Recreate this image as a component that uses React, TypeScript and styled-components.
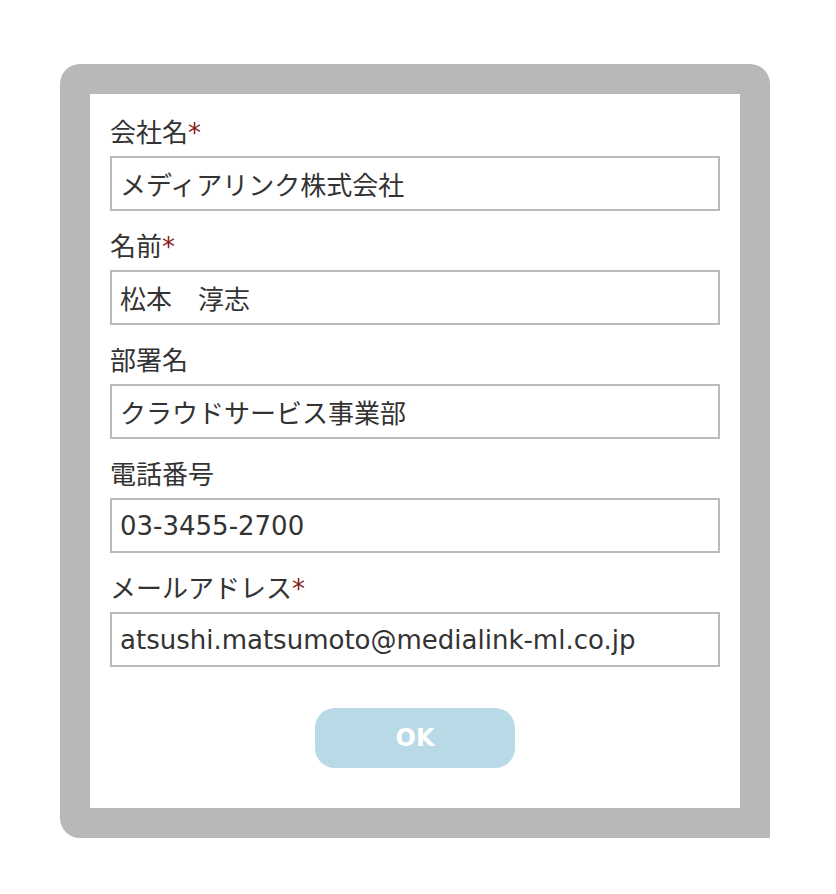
import styled, { createGlobalStyle } from "styled-components";

const GlobalStyle = createGlobalStyle`
  html, body {
    margin: 0;
    padding: 0;
    background: #ffffff;
  }
  body {
    font-family: "DejaVu Sans", "Noto Sans CJK JP", sans-serif;
    color: #333333;
  }
`;

type Field = {
  label: string;
  value: string;
  required?: boolean;
};

const fields: Field[] = [
  { label: "会社名", value: "メディアリンク株式会社", required: true },
  { label: "名前", value: "松本　淳志", required: true },
  { label: "部署名", value: "クラウドサービス事業部" },
  { label: "電話番号", value: "03-3455-2700" },
  {
    label: "メールアドレス",
    value: "atsushi.matsumoto@medialink-ml.co.jp",
    required: true,
  },
];

export default function App() {
  return (
    <>
      <GlobalStyle />
      <Page>
        <Frame>
          <Panel>
            {fields.map((f) => (
              <FieldGroup key={f.label}>
                <Label>
                  {f.label}
                  {f.required && <Required>*</Required>}
                </Label>
                <TextInput defaultValue={f.value} />
              </FieldGroup>
            ))}
            <ButtonRow>
              <OkButton>OK</OkButton>
            </ButtonRow>
          </Panel>
        </Frame>
      </Page>
    </>
  );
}

const Page = styled.div`
  padding: 64px 0 0 60px;
`;

const Frame = styled.div`
  width: 650px;
  border: 30px solid #b8b8b8;
  border-radius: 20px 20px 0 20px;
  background: #b8b8b8;
`;

const Panel = styled.div`
  background: #ffffff;
  padding: 24px 20px 40px;
  display: flex;
  flex-direction: column;
  gap: 21px;
`;

const FieldGroup = styled.div`
  display: flex;
  flex-direction: column;
  gap: 8px;
`;

const Label = styled.label`
  font-size: 26px;
  line-height: 30px;
  color: #333333;
`;

const Required = styled.span`
  color: #8b1a1a;
`;

const TextInput = styled.input`
  box-sizing: border-box;
  width: 100%;
  height: 55px;
  margin: 0;
  padding: 0 8px;
  border: 2px solid #bbbbbb;
  border-radius: 0;
  font-family: "DejaVu Sans", "Noto Sans CJK JP", sans-serif;
  font-size: 26px;
  color: #333333;
  background: #ffffff;
  outline: none;
`;

const ButtonRow = styled.div`
  display: flex;
  justify-content: center;
  padding-top: 20px;
`;

const OkButton = styled.button`
  width: 200px;
  height: 60px;
  border: none;
  border-radius: 20px;
  background: #b8dae6;
  color: #ffffff;
  font-family: "DejaVu Sans", sans-serif;
  font-weight: bold;
  font-size: 24px;
  cursor: pointer;
`;
